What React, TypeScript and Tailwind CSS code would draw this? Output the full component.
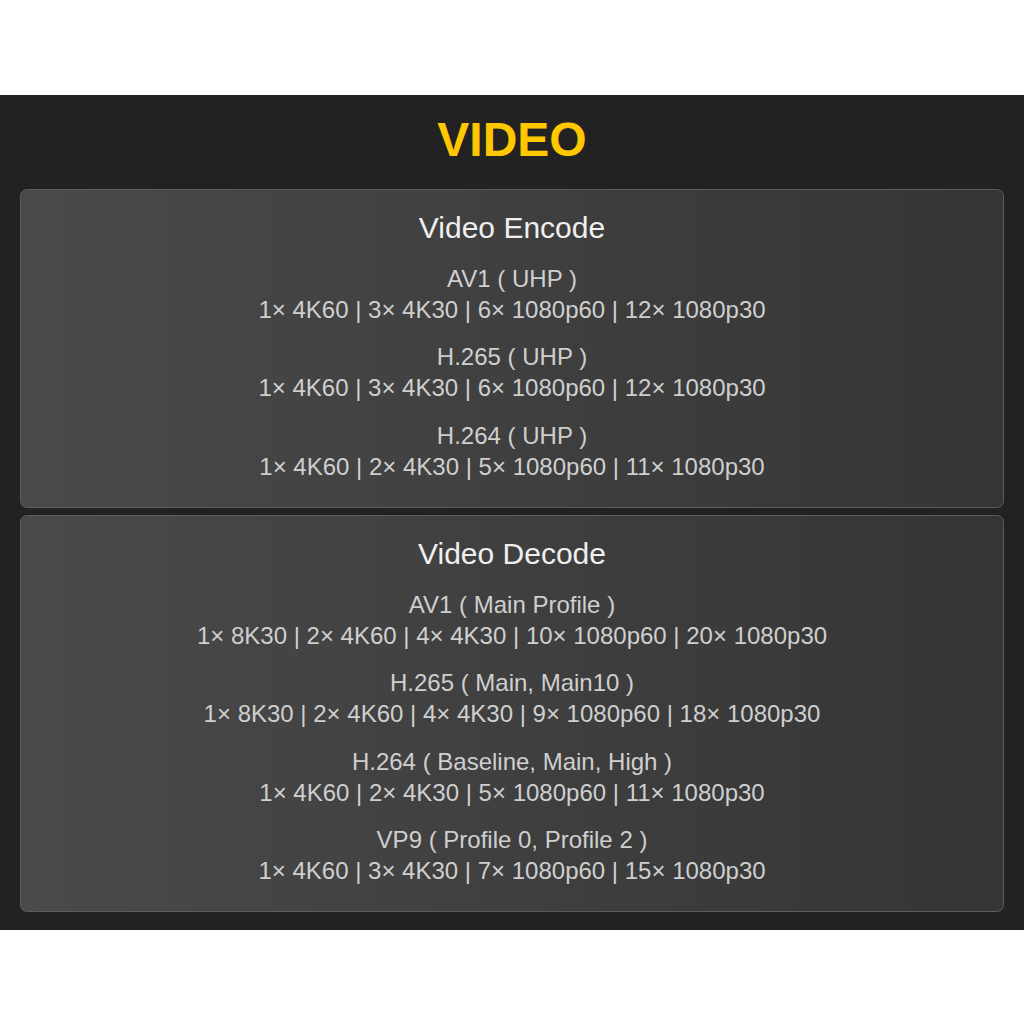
import React from 'react';

type Spec = { codec: string; modes: string };

const ENCODE: Spec[] = [
    { codec: 'AV1 ( UHP )', modes: '1× 4K60 | 3× 4K30 | 6× 1080p60 | 12× 1080p30' },
    { codec: 'H.265 ( UHP )', modes: '1× 4K60 | 3× 4K30 | 6× 1080p60 | 12× 1080p30' },
    { codec: 'H.264 ( UHP )', modes: '1× 4K60 | 2× 4K30 | 5× 1080p60 | 11× 1080p30' },
];

const DECODE: Spec[] = [
    { codec: 'AV1 ( Main Profile )', modes: '1× 8K30 | 2× 4K60 | 4× 4K30 | 10× 1080p60 | 20× 1080p30' },
    { codec: 'H.265 ( Main, Main10 )', modes: '1× 8K30 | 2× 4K60 | 4× 4K30 | 9× 1080p60 | 18× 1080p30' },
    { codec: 'H.264 ( Baseline, Main, High )', modes: '1× 4K60 | 2× 4K30 | 5× 1080p60 | 11× 1080p30' },
    { codec: 'VP9 ( Profile 0, Profile 2 )', modes: '1× 4K60 | 3× 4K30 | 7× 1080p60 | 15× 1080p30' },
];

const SpecCard: React.FC<{ title: string; items: Spec[] }> = ({ title, items }) => (
    <div className="rounded-[7px] border border-[#5c5c5c] bg-gradient-to-r from-[#4a4a4a] to-[#353535] pt-[20.5px] pb-[25px] text-center">
        <h2 className="text-[30px] leading-[34px] text-[#efefef]">{title}</h2>
        <div className="mt-[18px] flex flex-col gap-[16.5px]">
            {items.map(item => (
                <div key={item.codec} className="text-[24px] leading-[31px] text-[#cfcfcf]">
                    <p>{item.codec}</p>
                    <p>{item.modes}</p>
                </div>
            ))}
        </div>
    </div>
);

const App: React.FC = () => {
    return (
        <div className="min-h-screen bg-white pt-[95px] font-['Liberation_Sans',Arial,sans-serif]">
            <section className="bg-[#222222] px-[20px] pt-[21px] pb-[18px]">
                <h1 className="mb-[25px] text-center text-[48px] font-bold leading-[48px] text-[#ffc700]">VIDEO</h1>
                <div className="flex flex-col gap-[7.5px]">
                    <SpecCard title="Video Encode" items={ENCODE} />
                    <SpecCard title="Video Decode" items={DECODE} />
                </div>
            </section>
        </div>
    );
};

export default App;
